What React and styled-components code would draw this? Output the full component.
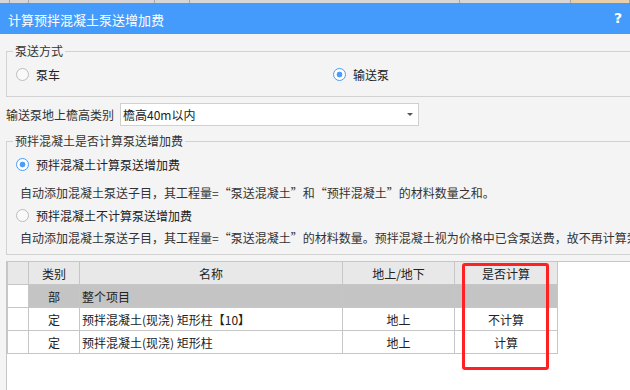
import React from "react";
import styled, { createGlobalStyle } from "styled-components";

const rows = [
  { kind: "部", name: "整个项目", place: "", calc: "", group: true },
  { kind: "定", name: "预拌混凝土(现浇) 矩形柱【10】", place: "地上", calc: "不计算" },
  { kind: "定", name: "预拌混凝土(现浇) 矩形柱", place: "地上", calc: "计算" },
];

function Radio({ checked, children }) {
  return (
    <RadioRow>
      <Circle $checked={checked} />
      <span>{children}</span>
    </RadioRow>
  );
}

export default function App() {
  return (
    <>
      <GlobalStyle />
      <Window>
        <TopStrip>
          <StripCell $w={9} />
          <StripCell $w={18} />
          <StripCell $w={125} />
          <StripCell $w={34} />
          <StripCell $w={269} />
          <StripCell $w={110} />
          <StripCell $w={30} $tan />
        </TopStrip>
        <TitleBar>
          <span>计算预拌混凝土泵送增加费</span>
          <Help>?</Help>
        </TitleBar>
        <Body>
          <Group>
            <Legend>泵送方式</Legend>
            <PumpChoices>
              <Radio>泵车</Radio>
              <Radio checked>输送泵</Radio>
            </PumpChoices>
          </Group>

          <ComboRow>
            <span>输送泵地上檐高类别</span>
            <Combo>
              <span>檐高40m以内</span>
              <Arrow />
            </Combo>
          </ComboRow>

          <Group $second>
            <Legend>预拌混凝土是否计算泵送增加费</Legend>
            <FirstOption>
              <Radio checked>预拌混凝土计算泵送增加费</Radio>
            </FirstOption>
            <Desc $gap={9}>
              自动添加混凝土泵送子目，其工程量=“泵送混凝土”和“预拌混凝土”的材料数量之和。
            </Desc>
            <Option>
              <Radio>预拌混凝土不计算泵送增加费</Radio>
            </Option>
            <Desc $gap={3}>
              自动添加混凝土泵送子目，其工程量=“泵送混凝土”的材料数量。预拌混凝土视为价格中已含泵送费，故不再计算泵送增加费。
            </Desc>
          </Group>

          <GridPanel>
            <Table>
              <colgroup>
                <col style={{ width: 21 }} />
                <col style={{ width: 51 }} />
                <col style={{ width: 263 }} />
                <col style={{ width: 112 }} />
                <col style={{ width: 103 }} />
              </colgroup>
              <thead>
                <tr>
                  <Th />
                  <Th>类别</Th>
                  <Th>名称</Th>
                  <Th>地上/地下</Th>
                  <Th>是否计算</Th>
                </tr>
              </thead>
              <tbody>
                {rows.map((r, i) => (
                  <tr key={i}>
                    <Td />
                    <Td $group={r.group} $center>{r.kind}</Td>
                    <Td $group={r.group}>{r.name}</Td>
                    <Td $group={r.group} $center>{r.place}</Td>
                    <Td $group={r.group} $center>{r.calc}</Td>
                  </tr>
                ))}
              </tbody>
            </Table>
            <Mark />
          </GridPanel>
        </Body>
      </Window>
    </>
  );
}

const GlobalStyle = createGlobalStyle`
  html, body {
    margin: 0;
    padding: 0;
    overflow: hidden;
    background: #f4f4f4;
  }
  body {
    font-family: "Noto Sans CJK SC", "Noto Sans", sans-serif;
    font-size: 12px;
    color: #333;
  }
`;

const Window = styled.div`
  width: 630px;
  height: 390px;
  display: flex;
  flex-direction: column;
  overflow: hidden;
  background: #f4f4f4;
`;

const TopStrip = styled.div`
  height: 3px;
  display: flex;
  background: #d6d6d6;
`;

const StripCell = styled.div`
  width: ${(p) => p.$w}px;
  flex: ${(p) => (p.$tan ? "1" : "none")};
  border-right: 1px solid #a8a8a8;
  background: ${(p) => (p.$tan ? "#e9cfa9" : "transparent")};
`;

const TitleBar = styled.div`
  height: 31px;
  flex: none;
  display: flex;
  align-items: center;
  justify-content: space-between;
  padding: 2px 8px 0 8px;
  box-sizing: border-box;
  background: #459bfc;
  color: #fff;
  font-size: 13px;
`;

const Help = styled.span`
  font-family: "DejaVu Sans", sans-serif;
  font-weight: bold;
  font-size: 14px;
  margin-top: -3px;
`;

const Body = styled.div`
  flex: 1;
  display: flex;
  flex-direction: column;
  padding-left: 6px;
`;

const Group = styled.fieldset`
  margin: ${(p) => (p.$second ? "7px" : "9px")} -30px 0 0;
  padding: 0 0 ${(p) => (p.$second ? "6px" : "12px")} 9px;
  border: 1px solid #d2d2d2;
  min-width: 0;
`;

const Legend = styled.legend`
  padding: 0 2px;
  margin-left: -3px;
  line-height: 16px;
  font-size: 12px;
  color: #333;
`;

const PumpChoices = styled.div`
  display: grid;
  grid-template-columns: 317px 1fr;
  margin-top: 5px;
`;

const RadioRow = styled.div`
  display: flex;
  align-items: center;
  gap: 7px;
  height: 20px;
  font-size: 12px;
  color: #222;
`;

const Circle = styled.span`
  width: 11px;
  height: 11px;
  border-radius: 50%;
  border: 1px solid ${(p) => (p.$checked ? "#4a9df8" : "#bdbdbd")};
  background: ${(p) =>
    p.$checked
      ? "radial-gradient(circle, #4a9df8 0 2.6px, #fff 3.2px)"
      : "#f9f9f9"};
  flex: none;
`;

const ComboRow = styled.div`
  display: flex;
  align-items: center;
  gap: 6px;
  margin-top: 6px;
  color: #333;
`;

const Combo = styled.div`
  width: 290px;
  height: 21px;
  border: 1px solid #d0d0d0;
  background: #fff;
  display: flex;
  align-items: center;
  justify-content: space-between;
  padding: 0 5px 0 2px;
  box-sizing: content-box;
  color: #222;
`;

const Arrow = styled.span`
  width: 0;
  height: 0;
  border-left: 3px solid transparent;
  border-right: 3px solid transparent;
  border-top: 3px solid #555;
`;

const FirstOption = styled.div`
  margin-top: 5px;
`;

const Option = styled.div`
  margin-top: 2px;
`;

const Desc = styled.div`
  margin-top: ${(p) => p.$gap}px;
  padding-left: 4px;
  height: 20px;
  line-height: 20px;
  white-space: nowrap;
  color: #333;
`;

const GridPanel = styled.div`
  position: relative;
  flex: 1;
  margin-top: 6px;
  background: #fff;
  border-top: 1px solid #c6c6c6;
  border-left: 1px solid #c6c6c6;
`;

const Table = styled.table`
  border-collapse: collapse;
  table-layout: fixed;
  width: 550px;
  font-size: 12px;
  color: #222;
`;

const Th = styled.th`
  height: 22px;
  padding: 0;
  font-weight: normal;
  background: #e8e8e8;
  border: 1px solid #c6c6c6;
  border-top: none;
  text-align: center;
`;

const Td = styled.td`
  height: 22px;
  padding: 0 2px;
  background: ${(p) => (p.$group ? "#c4c4c4" : "#fff")};
  border: 1px solid #c6c6c6;
  text-align: ${(p) => (p.$center ? "center" : "left")};
  white-space: nowrap;
  overflow: hidden;
`;

const Mark = styled.div`
  position: absolute;
  left: 455px;
  top: 1px;
  width: 81px;
  height: 101px;
  border: 3px solid #ff2121;
  border-radius: 3px;
`;
